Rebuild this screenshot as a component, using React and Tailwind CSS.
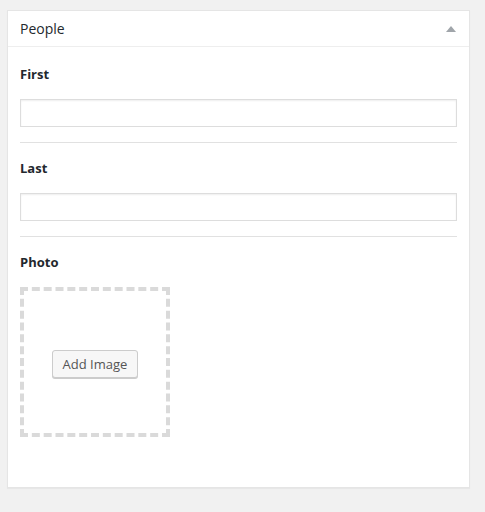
import React from 'react';

const Field = ({ label, first, last, children }) => (
  <div className="px-[12px]">
    <div
      className={
        (first ? 'pt-[17px]' : 'pt-[15px] border-t border-[#e1e1e1]') +
        (last ? ' pb-[50px]' : ' pb-[15px]')
      }
    >
      <div className="text-[13px] leading-[20px] font-bold text-[#23282d] mb-[15px]">
        {label}
      </div>
      {children}
    </div>
  </div>
);

const TextInput = () => (
  <input
    type="text"
    className="block w-full h-[28px] border border-[#dddddd] shadow-[inset_0_1px_2px_rgba(0,0,0,0.07)] outline-none px-[6px] text-[14px]"
  />
);

const App = () => {
  return (
    <div className="min-h-[512px] bg-[#f1f1f1] pt-[10px] pl-[7px] font-['Open_Sans',sans-serif]">
      <div className="w-[463px] bg-white border border-[#e5e5e5] shadow-[0_1px_1px_rgba(0,0,0,0.04)]">
        {/* header */}
        <div className="h-[36px] flex items-center justify-between px-[12px] border-b border-[#eeeeee]">
          <h2 className="text-[14px] leading-[20px] font-medium text-[#23282d]">People</h2>
          <svg width="10" height="6" viewBox="0 0 10 6" className="mr-[1px]">
            <path d="M5 0 L10 6 L0 6 Z" fill="#a0a5aa" />
          </svg>
        </div>

        <Field label="First" first>
          <TextInput />
        </Field>

        <Field label="Last">
          <TextInput />
        </Field>

        <Field label="Photo" last>
          <div className="w-[150px] h-[150px] border-4 border-dashed border-[#dadada] flex items-center justify-center">
            <button className="mt-[3px] h-[28px] px-[10px] text-[13px] leading-[26px] text-[#555555] bg-[#f7f7f7] border border-[#cccccc] rounded-[3px] shadow-[0_1px_0_#cccccc]">
              Add Image
            </button>
          </div>
        </Field>
      </div>
    </div>
  );
};

export default App;
